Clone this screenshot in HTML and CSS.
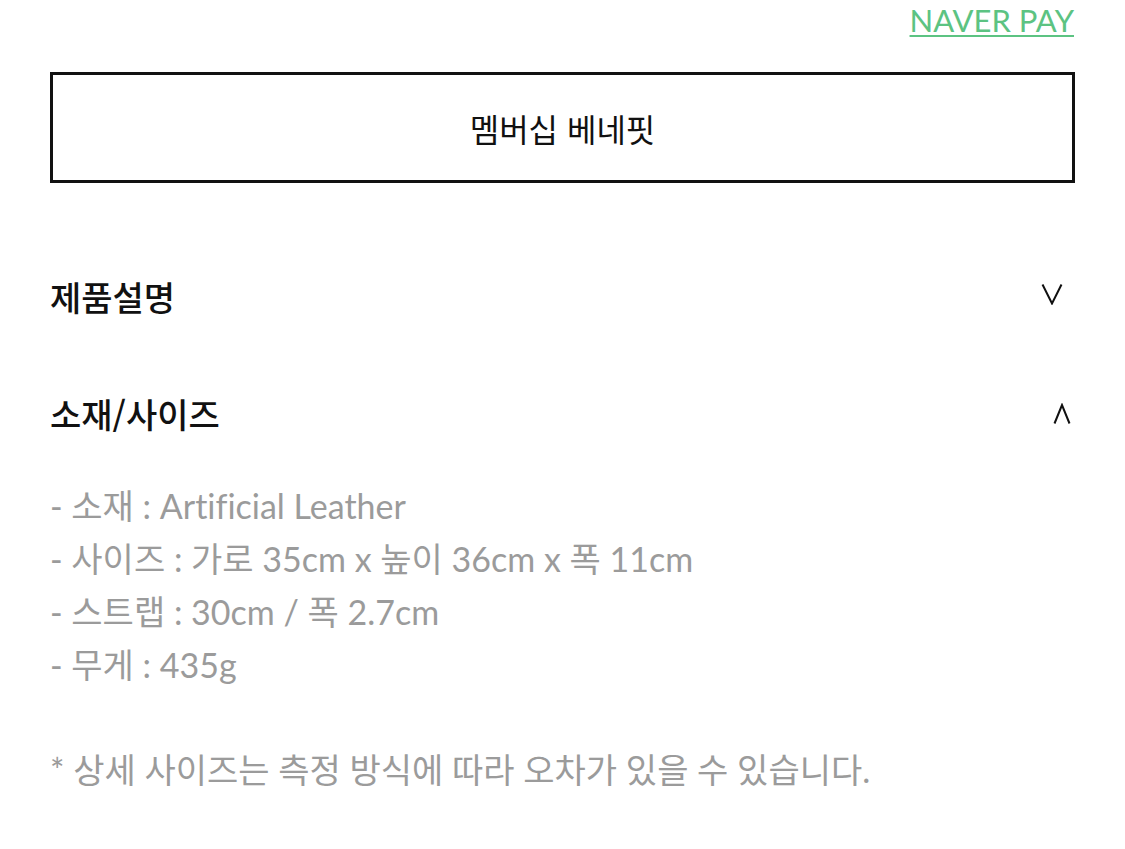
FILE: index.html
```html
<!DOCTYPE html>
<html lang="ko">
<head>
<meta charset="utf-8">
<link rel="stylesheet" href="styles.css">
</head>
<body>
<div class="page">
  <div class="pay-row"><a class="naver-pay">NAVER PAY</a></div>
  <div class="benefit">멤버십 베네핏</div>
  <div class="section section-first">
    <div class="sec-head">
      <span class="sec-title">제품설명</span>
      <svg class="chev chev-down" width="22" height="22" viewBox="0 0 22 22"><polyline points="1.5,1.5 11,20.5 20.5,1.5" fill="none" stroke="#111" stroke-width="2"/></svg>
    </div>
  </div>
  <div class="section">
    <div class="sec-head">
      <span class="sec-title">소재/사이즈</span>
      <svg class="chev chev-up" width="18" height="22" viewBox="0 0 18 22"><polyline points="1.5,20.5 9,2 16.5,20.5" fill="none" stroke="#111" stroke-width="2"/></svg>
    </div>
    <ul class="specs">
      <li>- 소재 : Artificial Leather</li>
      <li>- 사이즈 : 가로 35cm x 높이 36cm x 폭 11cm</li>
      <li>- 스트랩 : 30cm / 폭 2.7cm</li>
      <li>- 무게 : 435g</li>
    </ul>
    <p class="note">* 상세 사이즈는 측정 방식에 따라 오차가 있을 수 있습니다.</p>
  </div>
</div>
</body>
</html>
```
FILE: styles.css
```css
html, body {
  margin: 0;
  padding: 0;
  background: #fff;
}
body {
  font-family: "Noto Sans CJK KR", "Noto Sans", sans-serif;
  color: #111;
}
.page {
  padding: 0 50px 0 50px;
}
.pay-row {
  display: flex;
  justify-content: flex-end;
  height: 72px;
}
.naver-pay {
  font-family: "Lato", "Noto Sans CJK KR", sans-serif;
  font-size: 31px;
  line-height: 40px;
  color: #5cc382;
  text-decoration: underline;
  text-decoration-thickness: 2px;
  text-underline-offset: 3px;
  padding-right: 1px;
}
.benefit {
  border: 3px solid #111;
  height: 105px;
  display: flex;
  align-items: center;
  justify-content: center;
  font-size: 32px;
  color: #111;
}
.section {
  display: flex;
  flex-direction: column;
}
.sec-head {
  display: flex;
  justify-content: space-between;
  align-items: center;
  height: 117px;
}
.section-first .sec-head {
  margin-top: 55px;
}
.sec-title {
  font-size: 34px;
  font-weight: 500;
}
.chev-down {
  margin-right: 12px;
  margin-top: -6px;
}
.chev-up {
  margin-right: 4px;
}
.specs {
  list-style: none;
  margin: 0;
  padding: 7px 0 0 0;
  color: #9b9b9b;
  font-family: "Lato", "Noto Sans CJK KR", sans-serif;
  font-size: 34px;
  line-height: 53px;
  font-variant-ligatures: none;
}
.note {
  margin: 52px 0 0 0;
  color: #9b9b9b;
  font-family: "Lato", "Noto Sans CJK KR", sans-serif;
  font-size: 34px;
  line-height: 53px;
  font-variant-ligatures: none;
}
```
